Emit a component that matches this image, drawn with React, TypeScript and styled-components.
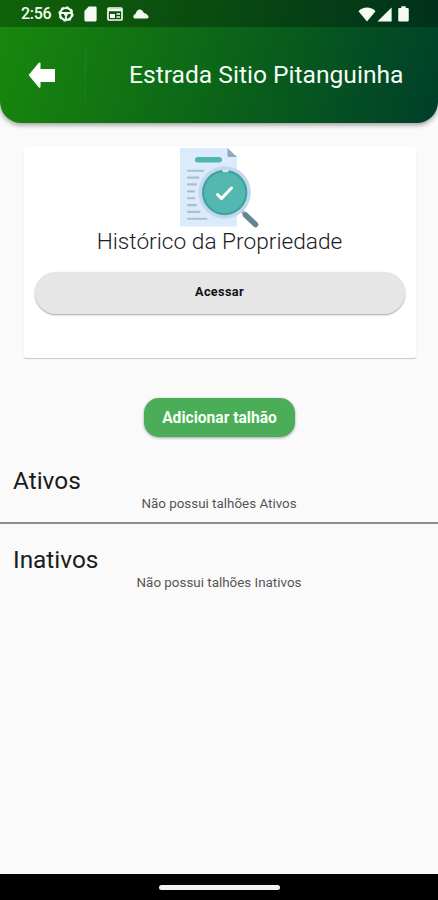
import React from 'react';
import styled, { createGlobalStyle } from 'styled-components';

const GlobalStyle = createGlobalStyle`
  * { box-sizing: border-box; }
  html, body { margin: 0; padding: 0; background: #fafafa; }
  button { font-family: inherit; border: 0; padding: 0; margin: 0; cursor: pointer; }
`;

const Screen = styled.div`
  width: 438px;
  height: 900px;
  overflow: hidden;
  display: flex;
  flex-direction: column;
  background: #fafafa;
  font-family: Roboto, 'Liberation Sans', sans-serif;
  color: #1c1c1c;
`;

const Header = styled.header`
  height: 123px;
  flex: none;
  display: flex;
  flex-direction: column;
  overflow: hidden;
  border-radius: 0 0 21px 21px;
  background: linear-gradient(107deg, #18870d 3%, #0c6518 50%, #004129 97%);
  box-shadow: 0 2px 5px rgba(0, 0, 0, 0.38);
`;

const StatusBar = styled.div`
  height: 27px;
  flex: none;
  display: flex;
  align-items: center;
  justify-content: space-between;
  padding: 1px 29px 0 21px;
  background: rgba(0, 0, 0, 0.28);
  color: #f4fbf2;
`;

const StatusGroup = styled.div<{ $gap: number }>`
  display: flex;
  align-items: center;
  gap: ${(p) => p.$gap}px;
`;

const Clock = styled.span`
  width: 29px;
  font-size: 16px;
  line-height: 26px;
  font-weight: 500;
  letter-spacing: -0.3px;
  white-space: nowrap;
`;

const Toolbar = styled.div`
  flex: 1;
  display: flex;
  align-items: center;
`;

const BackButton = styled.button`
  width: 86px;
  height: 58px;
  display: flex;
  align-items: center;
  padding-left: 28px;
  background: transparent;
  border-right: 1px solid rgba(90, 190, 90, 0.12);
`;

const Title = styled.h1`
  margin: 0 0 0 43px;
  font-size: 24.6px;
  line-height: 30px;
  font-weight: 400;
  color: #f5fbf5;
  white-space: nowrap;
`;

const Content = styled.main`
  flex: 1;
  display: flex;
  flex-direction: column;
`;

const Card = styled.section`
  width: 392px;
  height: 211px;
  margin: 24px 0 0 24px;
  display: flex;
  flex-direction: column;
  align-items: center;
  background: #fff;
  border-radius: 2px;
  box-shadow: 0 1px 1px rgba(0, 0, 0, 0.2);
`;

const CardTitle = styled.h2`
  margin: -1px 0 0 -1px;
  font-size: 22.7px;
  line-height: 28px;
  font-weight: 300;
  white-space: nowrap;
`;

const AccessButton = styled.button`
  width: 370px;
  height: 42px;
  margin: 16px 1px 0 0;
  padding-bottom: 4px;
  border-radius: 21px;
  background: #e6e6e6;
  color: #111;
  font-size: 12.7px;
  font-weight: 700;
  letter-spacing: 0.35px;
  box-shadow: 0 1px 2px rgba(0, 0, 0, 0.36);
`;

const AddButton = styled.button`
  width: 151px;
  height: 39px;
  margin: 40px 0 0 144px;
  border-radius: 15px;
  background: #4bad58;
  color: #f6fff5;
  font-size: 15.6px;
  font-weight: 700;
  white-space: nowrap;
  box-shadow: 0 1px 3px rgba(0, 0, 0, 0.36);
`;

const Section = styled.section<{ $top: number; $divided?: boolean }>`
  margin-top: ${(p) => p.$top}px;
  height: 58px;
  border-bottom: ${(p) => (p.$divided ? '2px solid #8e8e8e' : '0')};
`;

const SectionTitle = styled.h2`
  margin: 0;
  padding-left: 13px;
  font-size: 24.4px;
  line-height: 30px;
  font-weight: 400;
`;

const EmptyNote = styled.p`
  margin: 0;
  font-size: 13.4px;
  line-height: 15px;
  text-align: center;
  color: #565656;
`;

const NavBar = styled.footer`
  height: 26px;
  flex: none;
  display: flex;
  align-items: center;
  justify-content: center;
  background: #000;
`;

const HomePill = styled.div`
  width: 121px;
  height: 5px;
  border-radius: 3px;
  background: #f2f2f2;
`;

const WheelIcon = () => (
  <svg width="16" height="16" viewBox="0 0 16 16" fill="none" stroke="currentColor">
    <circle cx="8" cy="8" r="6" strokeWidth="2.2" />
    <circle cx="8" cy="8" r="7.1" strokeWidth="1.1" strokeDasharray="2.8 2.78" />
    <path d="M2.5 7h11M8 8v5.5" strokeWidth="1.8" />
    <path d="M5.4 7h5.2L9.3 9.7H6.7z" fill="currentColor" stroke="none" />
  </svg>
);

const SdCardIcon = () => (
  <svg width="13" height="16" viewBox="0 0 13 16">
    <path d="M4.7.6h6.6c.8 0 1.3.5 1.3 1.3v12.2c0 .8-.5 1.3-1.3 1.3H1.7c-.8 0-1.3-.5-1.3-1.3V5z" fill="currentColor" />
  </svg>
);

const NewsIcon = () => (
  <svg width="16" height="14" viewBox="0 0 16 14">
    <rect x="1" y="1" width="14" height="12" rx="1" fill="none" stroke="currentColor" strokeWidth="1.7" />
    <path d="M1 3h14" stroke="currentColor" strokeWidth="2.4" />
    <path d="M3 7h5v4H3zM9.5 6.2H13v1.6H9.5zM9.5 9.2H13v1.6H9.5z" fill="currentColor" />
  </svg>
);

const CloudIcon = () => (
  <svg width="16" height="10" viewBox="0 0 17 10" preserveAspectRatio="none">
    <path d="M2.7 9.6C1.3 9.6.4 8.900.4 7.700c0-1.300.9-2.300 2.400-2.900C3.500 2.300 5.100.6 7.200.6c2 0 3.300 1.300 4.400 3.300 2.600.6 4.500 1.900 4.900 3.700.2 1.200-.6 2-2 2z" fill="currentColor" />
  </svg>
);

const WifiIcon = () => (
  <svg width="18" height="15" viewBox="0 0 18 15">
    <path d="M.5 4.2C2.8 1.7 5.6.5 9 .5s6.200 1.200 8.500 3.700L9 14.600z" fill="currentColor" />
  </svg>
);

const SignalIcon = () => (
  <svg width="15" height="15" viewBox="0 0 15 15">
    <path d="M14.600.4v14.200H.4z" fill="currentColor" />
  </svg>
);

const BatteryIcon = () => (
  <svg width="11" height="16" viewBox="0 0 10 16" preserveAspectRatio="none">
    <path d="M3 .3h4v1.600h1.500c.8 0 1.300.5 1.300 1.200v11.200c0 .8-.5 1.300-1.300 1.300h-7c-.8 0-1.300-.5-1.300-1.300V3.100c0-.7.5-1.200 1.300-1.200H3z" fill="currentColor" />
  </svg>
);

const BackArrow = () => (
  <svg width="28" height="26" viewBox="0 0 28 26">
    <path d="M.6 13 10.800.8q1.700-.8 1.700 1V7H27v13H12.500v4.400q0 1.800-1.700 1z" fill="#fff" />
  </svg>
);

const ReportIllustration = () => (
  <svg width="82" height="82" viewBox="0 0 82 82">
    <path d="M1 1h47.500l9.500 9V79.500H1z" fill="#dcebfb" />
    <path d="M48.500 1v7.500c0 1 .6 1.500 1.500 1.500h8z" fill="#91a9b9" />
    <rect x="16" y="10" width="27" height="5.400" rx="2.700" fill="#50b7ae" />
    <g stroke="#a9c0cf" strokeWidth="2.100" strokeLinecap="round">
      <path d="M9 23.800h15.500M9 30.600h10.500M9 37.400h8M9 44.400h6M9 51.300h6.500M9 58.100h8M9 64.900h11.500M9 71.800h18.500" />
    </g>
    <path d="M62 63l5.500 6" stroke="#9db5c3" strokeWidth="4" />
    <path d="M66.500 68l10 9.500" stroke="#668592" strokeWidth="5.600" strokeLinecap="round" />
    <circle cx="45.700" cy="45.500" r="26.200" fill="#c3d8ef" />
    <circle cx="45.700" cy="45.500" r="22.700" fill="#3fa49d" />
    <circle cx="45.700" cy="45.500" r="20.500" fill="#55b8b0" />
    <path d="M44.500 23.800h4" stroke="#d7e8f5" strokeWidth="2.400" fill="none" strokeLinecap="round" />
    <path d="M38.500 47.500l4 4L52.500 41" fill="none" stroke="#fff" strokeWidth="3" strokeLinecap="round" strokeLinejoin="round" />
  </svg>
);

const IllustrationSlot = styled.div`
  height: 82px;
  display: flex;
`;

export default function App() {
  return (
    <>
      <GlobalStyle />
      <Screen>
        <Header>
          <StatusBar>
            <StatusGroup $gap={8}>
              <Clock>2:56</Clock>
              <StatusGroup $gap={10}>
                <WheelIcon />
                <SdCardIcon />
                <NewsIcon />
                <CloudIcon />
              </StatusGroup>
            </StatusGroup>
            <StatusGroup $gap={1}>
              <WifiIcon />
              <StatusGroup $gap={6}>
                <SignalIcon />
                <BatteryIcon />
              </StatusGroup>
            </StatusGroup>
          </StatusBar>
          <Toolbar>
            <BackButton aria-label="Voltar">
              <BackArrow />
            </BackButton>
            <Title>Estrada Sitio Pitanguinha</Title>
          </Toolbar>
        </Header>
        <Content>
          <Card>
            <IllustrationSlot>
              <ReportIllustration />
            </IllustrationSlot>
            <CardTitle>Histórico da Propriedade</CardTitle>
            <AccessButton>Acessar</AccessButton>
          </Card>
          <AddButton>Adicionar talhão</AddButton>
          <Section $top={29} $divided>
            <SectionTitle>Ativos</SectionTitle>
            <EmptyNote>Não possui talhões Ativos</EmptyNote>
          </Section>
          <Section $top={21}>
            <SectionTitle>Inativos</SectionTitle>
            <EmptyNote>Não possui talhões Inativos</EmptyNote>
          </Section>
        </Content>
        <NavBar>
          <HomePill />
        </NavBar>
      </Screen>
    </>
  );
}
